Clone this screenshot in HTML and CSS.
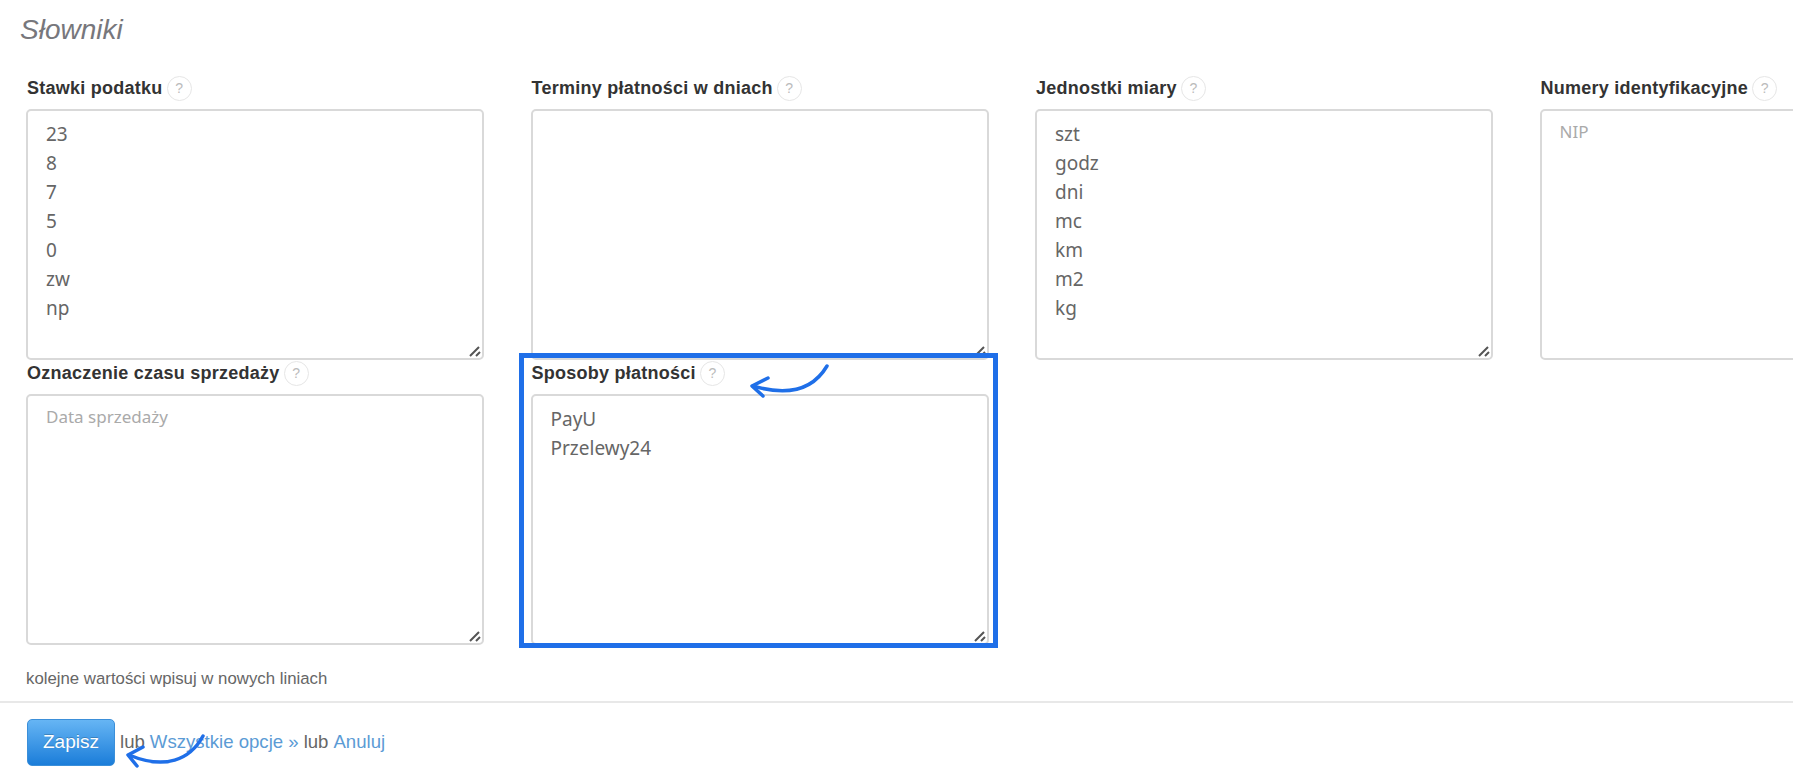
FILE: index.html
```html
<!DOCTYPE html>
<html lang="pl">
<head>
<meta charset="utf-8">
<title>Słowniki</title>
<link rel="stylesheet" href="styles.css">
</head>
<body>
<main class="page">
  <h2 class="title">Słowniki</h2>
  <div class="fields">
    <div class="field">
      <label class="label">Stawki podatku <span class="help">?</span></label>
      <textarea class="area">23
8
7
5
0
zw
np</textarea>
    </div>
    <div class="field">
      <label class="label">Terminy płatności w dniach <span class="help">?</span></label>
      <textarea class="area"></textarea>
    </div>
    <div class="field">
      <label class="label">Jednostki miary <span class="help">?</span></label>
      <textarea class="area">szt
godz
dni
mc
km
m2
kg</textarea>
    </div>
    <div class="field">
      <label class="label">Numery identyfikacyjne <span class="help">?</span></label>
      <textarea class="area" placeholder="NIP"></textarea>
    </div>
    <div class="field">
      <label class="label">Oznaczenie czasu sprzedaży <span class="help">?</span></label>
      <textarea class="area" placeholder="Data sprzedaży"></textarea>
    </div>
    <div class="field">
      <label class="label">Sposoby płatności <span class="help">?</span></label>
      <textarea class="area">PayU
Przelewy24</textarea>
    </div>
  </div>
  <p class="hint">kolejne wartości wpisuj w nowych liniach</p>
  <footer class="actions">
    <button class="save" type="button">Zapisz</button>
    <span class="or">lub</span>
    <a class="link" href="#">Wszystkie opcje »</a>
    <span class="or">lub</span>
    <a class="link" href="#">Anuluj</a>
  </footer>
</main>
<div class="highlight"></div>
<svg class="arrows" width="1793" height="774" viewBox="0 0 1793 774" fill="none" stroke="#1f6fe8" stroke-width="3.5" stroke-linecap="round" stroke-linejoin="round">
  <path d="M827 366C814 388 790 397 753 386"/>
  <path d="M768 378L752 386L763 396"/>
  <path d="M203 736C190 760 165 770 129 755"/>
  <path d="M143 747L128 755L137 766"/>
</svg>
</body>
</html>
```

FILE: styles.css
```css
* { box-sizing: border-box; }
html, body { margin: 0; height: 100%; overflow: hidden; background: #fff; }
body { font-family: "Liberation Sans", Arial, sans-serif; color: #333; }
.page { width: 1793px; height: 774px; overflow: hidden; padding-top: 14px; }
.title {
  margin: 0 0 0 20px;
  font-size: 28px;
  line-height: 32px;
  font-weight: 400;
  font-style: italic;
  color: #77777c;
}
.fields {
  display: grid;
  grid-template-columns: repeat(4, 458px);
  column-gap: 46.5px;
  row-gap: 0;
  margin: 29px 0 0 26px;
  width: 2000px;
}
.field { display: flex; flex-direction: column; height: 285px; }
.label {
  display: flex;
  align-items: center;
  gap: 4px;
  height: 34px;
  padding: 0 0 8px 1px;
  font-size: 18px;
  letter-spacing: .25px;
  font-weight: 700;
  color: #333;
}
.help {
  display: inline-flex;
  align-items: center;
  justify-content: center;
  width: 25px;
  height: 25px;
  border: 1.5px solid #e6e6e6;
  border-radius: 50%;
  font-size: 14px;
  letter-spacing: 0;
  font-weight: 400;
  color: #bbb;
}
.area {
  display: block;
  width: 458px;
  height: 251px;
  padding: 9px 18px;
  border: 2px solid #d9d9d9;
  border-radius: 5px;
  background: #fff;
  font-family: "Noto Sans", sans-serif;
  font-size: 19px;
  line-height: 29px;
  color: #666;
  outline: none;
}
.area::placeholder { color: #aaa; font-size: 17px; line-height: 23px; opacity: 1; }
.area::-webkit-resizer {
  background: url("data:image/svg+xml,%3Csvg xmlns='http://www.w3.org/2000/svg' width='15' height='15'%3E%3Cpath d='M3 13L12 4M9 13L13 9' stroke='%23555' stroke-width='2' fill='none'/%3E%3C/svg%3E") no-repeat center;
}
.hint {
  margin: 24px 0 0 26px;
  font-size: 16.8px;
  line-height: 20px;
  color: #666;
}
.actions {
  display: flex;
  align-items: center;
  gap: 5px;
  height: 72px;
  margin-top: 12px;
  padding: 16px 0 8px 27px;
  border-top: 2px solid #e8e8e8;
  font-size: 18.6px;
}
.save {
  width: 88px;
  height: 47px;
  margin-right: 0;
  border: 1px solid #3b8fd9;
  border-radius: 5px;
  background: linear-gradient(#66b5f4, #1b7dd9);
  font-family: inherit;
  font-size: 19px;
  color: #fff;
  text-shadow: 0 -1px 0 rgba(0, 0, 0, .2);
}
.or { color: #666; }
.link { color: #5b9bd5; text-decoration: none; }
.highlight {
  position: absolute;
  left: 519px;
  top: 353px;
  width: 479px;
  height: 295px;
  border: 5px solid #1f6fe8;
}
.arrows { position: absolute; left: 0; top: 0; pointer-events: none; }
```
